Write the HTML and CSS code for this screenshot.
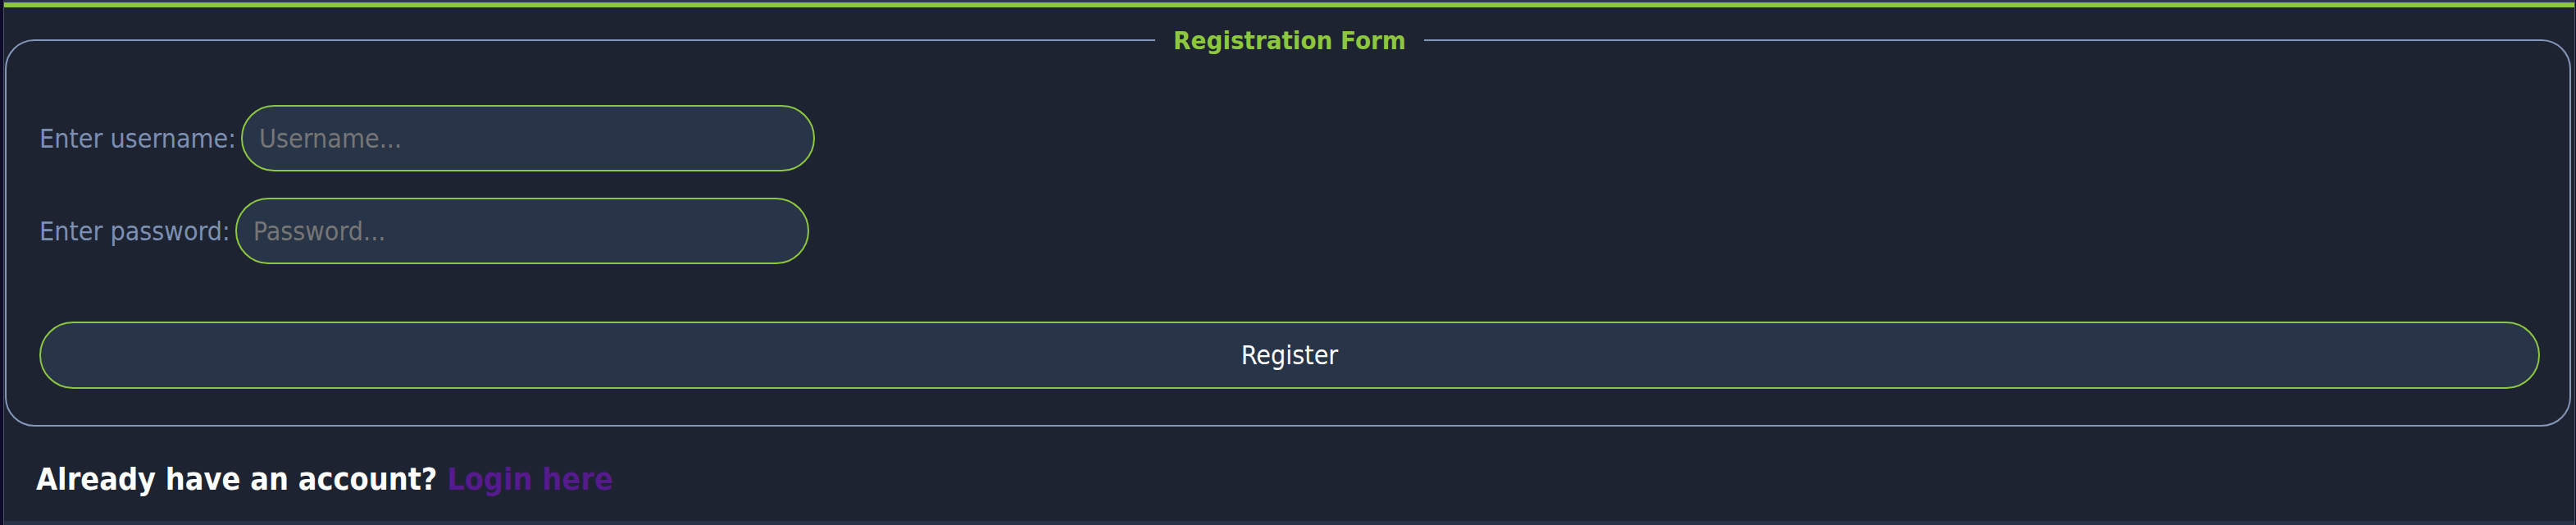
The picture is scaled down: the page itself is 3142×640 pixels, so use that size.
FILE: index.html
```html
<!DOCTYPE html>
<html lang="en">
<head>
<meta charset="utf-8">
<title>Registration</title>
<link rel="stylesheet" href="styles.css">
</head>
<body>
  <div class="page">
    <div class="topbar"></div>
    <main class="content">
      <form class="reg-form" onsubmit="return false;">
        <fieldset class="reg-fieldset">
          <legend class="reg-legend">Registration Form</legend>
          <div class="field-row">
            <label class="field-label" for="username">Enter username:</label>
            <input class="field-input" id="username" type="text" placeholder="Username...">
          </div>
          <div class="field-row">
            <label class="field-label" for="password">Enter password:</label>
            <input class="field-input" id="password" type="password" placeholder="Password...">
          </div>
          <button class="register-btn" type="submit">Register</button>
        </fieldset>
      </form>
      <h3 class="login-prompt">Already have an account? <a class="login-link" href="#">Login here</a></h3>
    </main>
    <footer class="footer"></footer>
  </div>
</body>
</html>
```
FILE: styles.css
```css
html, body {
  margin: 0;
  padding: 0;
  height: 640px;
  overflow: hidden;
}

body {
  background: #0e0c28;
  font-family: "DejaVu Sans Condensed", "DejaVu Sans", sans-serif;
  font-stretch: condensed;
}

.page {
  margin: 0 1px 0 4px;
  border-left: 1px solid #4b5464;
  border-right: 1px solid #4b5464;
  border-top: 3px solid #2f3a48;
  background: #1d2330;
  min-height: 637px;
  display: flex;
  flex-direction: column;
}

.topbar {
  height: 6px;
  background: #8dc63f;
}

.content {
  height: 626px;
  display: flex;
  flex-direction: column;
}

.reg-form {
  margin: 0;
}

.reg-fieldset {
  margin: 22px 4px 0 1px;
  padding: 61px 36px 44px 40px;
  border: 2px solid #8497bb;
  border-radius: 36px;
  display: flex;
  flex-direction: column;
  gap: 32px;
}

.reg-legend {
  padding: 0 22px;
  margin: 0 auto;
  font-weight: bold;
  font-size: 31px;
  color: #8dc63f;
}

.field-row {
  display: flex;
  align-items: center;
  gap: 6px;
}

.field-label {
  font-size: 32px;
  color: #7d90b4;
}

.field-input {
  box-sizing: border-box;
  width: 700px;
  height: 81px;
  padding: 0 20px;
  border: 2px solid #8dc63f;
  border-radius: 41px;
  background: #283447;
  color: #ffffff;
  font-family: inherit;
  font-stretch: condensed;
  font-size: 32px;
  outline: none;
}

.field-input::placeholder {
  color: #767676;
}

.register-btn {
  box-sizing: border-box;
  margin-top: 38px;
  width: 100%;
  height: 82px;
  border: 2px solid #8dc63f;
  border-radius: 41px;
  background: #283447;
  color: #ffffff;
  font-family: inherit;
  font-stretch: condensed;
  font-size: 32px;
  cursor: pointer;
}

.login-prompt {
  margin: 42px 0 0 0;
  padding-left: 39px;
  font-size: 37.5px;
  font-weight: bold;
  color: #ffffff;
}

.login-link {
  color: #551a8b;
  text-decoration: none;
}

.footer {
  height: 10px;
  background: #283345;
}
```
